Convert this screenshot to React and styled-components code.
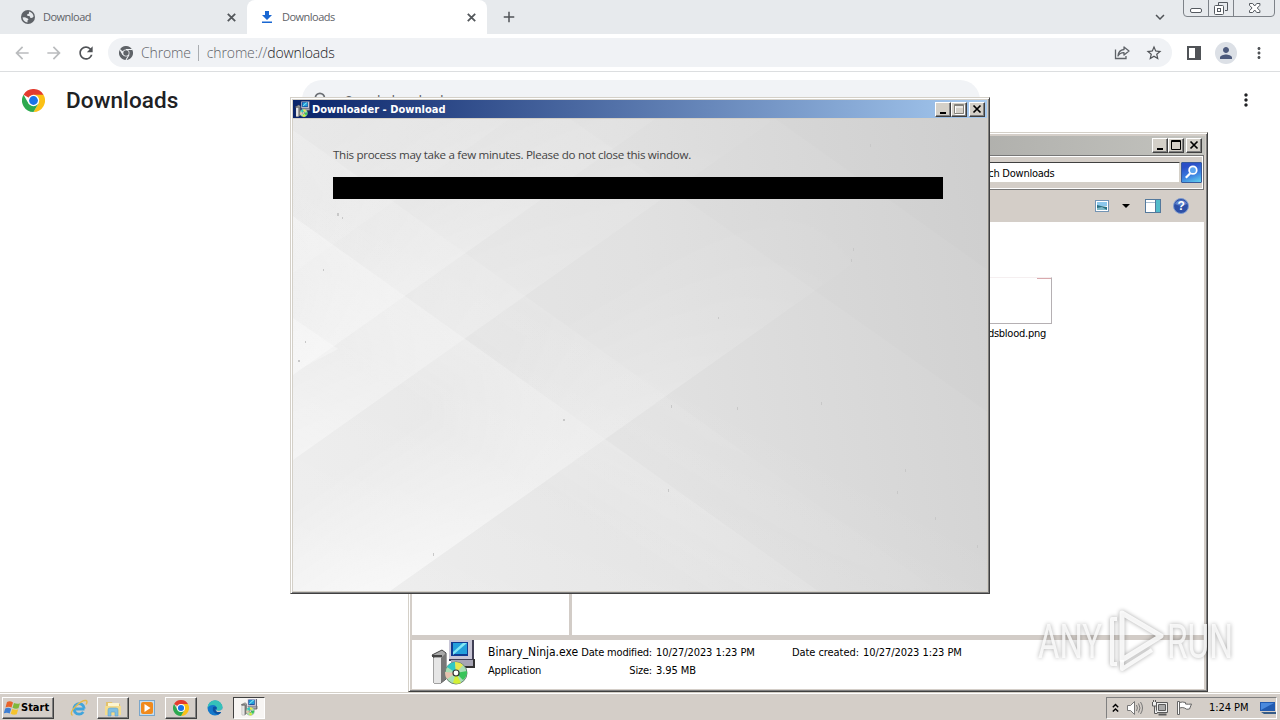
import React from 'react';
import styled, { createGlobalStyle, css } from 'styled-components';
import {
  MdAdd,
  MdArrowBack,
  MdArrowForward,
  MdExpandMore,
  MdMoreVert,
  MdPerson,
  MdRefresh,
  MdSearch,
  MdStarOutline,
} from 'react-icons/md';

const files = [{ name: 'dsblood.png' }];

export default function App() {
  return (
    <Desktop>
      <GlobalStyle />
      <Browser />
      <Explorer />
      <Downloader />
      <Watermark />
      <Taskbar />
    </Desktop>
  );
}

function Browser() {
  return (
    <BrowserWrapper>
      <TabStrip>
        <Tab width={247}>
          <GlobeIcon />
          <TabTitle>Download</TabTitle>
          <CloseIcon />
        </Tab>
        <Tab width={240} active>
          <DownloadIcon />
          <TabTitle>Downloads</TabTitle>
          <CloseIcon />
        </Tab>
        <NewTab>
          <MdAdd size={18} />
        </NewTab>
        <TabSearch>
          <MdExpandMore size={18} />
        </TabSearch>
        <AeroButtons />
      </TabStrip>
      <Toolbar>
        <NavIcons>
          <MdArrowBack size={20} color="#babcbe" />
          <MdArrowForward size={20} color="#babcbe" />
          <MdRefresh size={20} color="#505357" />
        </NavIcons>
        <Omnibox>
          <ChromeLogo size={14} mono />
          <Chip>Chrome</Chip>
          <Separator />
          <Url>
            <span>chrome://</span>downloads
          </Url>
          <ShareIcon />
          <MdStarOutline size={18} />
        </Omnibox>
        <PanelIcon />
        <Avatar>
          <MdPerson size={18} />
        </Avatar>
        <MdMoreVert size={18} color="#505357" />
      </Toolbar>
      <PageHeader>
        <ChromeLogo size={23} />
        <PageTitle>Downloads</PageTitle>
        <SearchField>
          <MdSearch size={20} color="#6b6f74" />
          <span>Search downloads</span>
        </SearchField>
        <MdMoreVert size={20} color="#202124" />
      </PageHeader>
    </BrowserWrapper>
  );
}

function Explorer() {
  return (
    <ExplorerWindow>
      <ExplorerTitle>
        <Controls />
      </ExplorerTitle>
      <AddressRow>
        <SearchBox>Search Downloads</SearchBox>
        <SearchButton>
          <svg width="19" height="19" viewBox="0 0 20 20">
            <circle cx="11.5" cy="7.500" r="4" fill="#5da4ee" stroke="#fff" strokeWidth="1.800" />
            <path d="M8.500 11L4 15.500" stroke="#fff" strokeWidth="2.400" />
          </svg>
        </SearchButton>
      </AddressRow>
      <CommandBar>
        <svg width="14" height="12" viewBox="0 0 14 12">
          <rect x=".5" y=".5" width="13" height="11" fill="#fff" stroke="#7394b4" />
          <path d="M2 2h10v4H2z" fill="#8cc8ec" />
          <path d="M2 5l4 1 6 1v3H2z" fill="#276f80" />
          <path d="M2 8l5-1 5 3H2z" fill="#7fb9c8" />
        </svg>
        <Arrow />
        <svg width="16" height="14" viewBox="0 0 16 14">
          <rect x=".5" y=".5" width="15" height="13" fill="#fff" stroke="#54799c" />
          <path d="M1 3.500h9" stroke="#a9bfd2" />
          <path d="M10 1h5v12h-5z" fill="#52bccb" />
          <path d="M10.500 1v12" stroke="#54799c" />
        </svg>
        <svg width="16" height="16" viewBox="0 0 16 16">
          <circle cx="8" cy="8" r="7.500" fill="#2d50a7" stroke="#7f9cd0" />
          <path d="M2 6a6.200 5 0 0 1 12 0q-6 3-12 0" fill="#5e82cc" />
          <text x="8" y="12.400" textAnchor="middle" fontFamily="Liberation Sans, sans-serif" fontWeight="700" fontSize="12" fill="#fff">?</text>
        </svg>
      </CommandBar>
      <Panes>
        <NavPane />
        <FilePane>
          {files.map((file) => (
            <File key={file.name}>
              <Thumb />
              <span>{file.name}</span>
            </File>
          ))}
        </FilePane>
      </Panes>
      <Details>
        <InstallerIcon width={46} height={46} />
        <DetailColumn width={94}>
          <FileName>Binary_Ninja.exe</FileName>
          <Label>Application</Label>
        </DetailColumn>
        <DetailColumn width={70} right>
          <Label>Date modified:</Label>
          <Label>Size:</Label>
        </DetailColumn>
        <DetailColumn width={136} gap={4}>
          <Value>10/27/2023 1:23 PM</Value>
          <Value>3.95 MB</Value>
        </DetailColumn>
        <DetailColumn width={67}>
          <Value>Date created:</Value>
        </DetailColumn>
        <DetailColumn width={120} gap={4}>
          <Value>10/27/2023 1:23 PM</Value>
        </DetailColumn>
      </Details>
    </ExplorerWindow>
  );
}

function Downloader() {
  return (
    <DialogWindow>
      <DialogTitle>
        <InstallerIcon width={16} height={17} />
        <strong>Downloader - Download</strong>
        <Controls disabledMax />
      </DialogTitle>
      <DialogBody>
        <Backdrop />
        <Message>This process may take a few minutes. Please do not close this window.</Message>
        <ProgressBar />
      </DialogBody>
    </DialogWindow>
  );
}

function Taskbar() {
  return (
    <TaskbarWrapper>
      <StartButton>
        <WindowsFlag />
        <span>Start</span>
      </StartButton>
      <TaskItem><IeIcon /></TaskItem>
      <TaskItem raised><FolderIcon /></TaskItem>
      <TaskItem><PlayerIcon /></TaskItem>
      <TaskItem raised><ChromeLogo size={16} /></TaskItem>
      <TaskItem><EdgeIcon /></TaskItem>
      <TaskItem pressed><InstallerIcon width={17} height={17} /></TaskItem>
      <Tray>
        <svg width="7" height="10" viewBox="0 0 7 10" fill="none" stroke="#000" strokeWidth="1.400">
          <path d="M.8 4.200L3.500 1.500l2.700 2.700M.8 8.600l2.700-2.700 2.700 2.700" />
        </svg>
        <svg width="18" height="16" viewBox="0 0 18 16" fill="none" stroke="#777">
          <path d="M1.500 5.500h3l4-4v13l-4-4h-3z" fill="#fff" />
          <path d="M10.500 5q1.800 3 0 6M12.500 3.500q3 4.500 0 9M14.500 2q4 6 0 12" />
        </svg>
        <svg width="18" height="16" viewBox="0 0 18 16" fill="none" stroke="#5a5a5a">
          <path d="M6.500 3.500h9v8h-9z" fill="#aaa" stroke="#eee" strokeWidth="3" />
          <path d="M5.500 2.500h11v10h-11zM7.500 4.500h7v6h-7z" />
          <path d="M1.500 2v4h4V2M3.500 6v7.500h3M2.500 0v2M4.500 0v2" fill="#eee" />
          <path d="M7.500 14.500h8" strokeWidth="2" />
        </svg>
        <svg width="17" height="16" viewBox="0 0 17 16" fill="#fff" stroke="#666">
          <path d="M3.500 2.500q3-1 6 0v1.500q3 .5 6 0l-2 5q-3 1-5-1-2-1-5 0z" />
          <path d="M1.500 1.500h2v13h-2z" />
        </svg>
        <Clock>1:24 PM</Clock>
        <svg width="16" height="14" viewBox="0 0 16 14">
          <path d="M0 1h15v9H0z" fill="#225bb0" />
          <path d="M1 2h13L1 9z" fill="#4b8add" />
          <path d="M1 11h15v2H4z" fill="#355b86" />
        </svg>
      </Tray>
    </TaskbarWrapper>
  );
}

function Controls({ disabledMax }) {
  return (
    <ControlGroup>
      <ControlButton>
        <path d="M4 9h6v2H4z" fill="#000" />
      </ControlButton>
      <ControlButton>
        {disabledMax && <path d="M3.500 2.500h9v9h-9zM4 4h8" fill="none" stroke="#fff" />}
        <path d="M2.500 1.500h9v9h-9zM2 2.500h10" fill="none" stroke={disabledMax ? '#85827b' : '#000'} />
      </ControlButton>
      <ControlButton close>
        <path d="M3.500 2.500l7 7M10.500 2.500l-7 7" stroke="#000" strokeWidth="1.700" />
      </ControlButton>
    </ControlGroup>
  );
}

function ControlButton({ close, children }) {
  return (
    <ControlBox $close={close}>
      <svg width="14" height="13" viewBox="0 0 14 13">{children}</svg>
    </ControlBox>
  );
}

function AeroButtons() {
  return (
    <AeroSvg width="94" height="18" viewBox="0 0 94 18" fill="none" stroke="#7d8288">
      <path d="M1.500 0v13q0 3.500 3.500 3.500h84q3.500 0 3.500-3.500V0M26.500 0v16M51.500 0v16" />
      <rect x="8.500" y="8.500" width="11" height="4" rx="1.500" fill="#fff" stroke="#555a60" />
      <path d="M36.500 5V2.500h9v8H43" stroke="#555a60" />
      <rect x="32.500" y="5.500" width="9" height="9" rx="1" fill="#fff" stroke="#555a60" />
      <rect x="35.500" y="8.500" width="3" height="3" stroke="#555a60" />
      <path d="M67.500 3.500h3.200l2 2.500 2-2.500h3.200v1.800L75.300 8l2.600 2.700v1.800h-3.200l-2-2.500-2 2.500h-3.200v-1.800L70.100 8l-2.600-2.700z" fill="#fff" stroke="#555a60" />
    </AeroSvg>
  );
}

function CloseIcon() {
  return (
    <svg width="13" height="13" viewBox="0 0 13 13" stroke="#53575b" strokeWidth="1.800">
      <path d="M2.800 2.800l7.400 7.400M10.200 2.800l-7.400 7.400" />
    </svg>
  );
}

function GlobeIcon() {
  return (
    <svg width="16" height="16" viewBox="0 0 16 16">
      <circle cx="8" cy="8" r="7" fill="#5f6368" />
      <path d="M2.500 8.500q3-.5 4 .5 1.500 0 2 1.500l-1 1v2q-4-.5-5-5zM9 2.500q4 1 4.600 5-1.600 2-3.100 1.500l-1-2H7.500L7 5.500l2-1z" fill="#e7eaed" />
    </svg>
  );
}

function DownloadIcon() {
  return (
    <svg width="16" height="16" viewBox="0 0 16 16" fill="#1967d2">
      <path d="M6 2h4v4h3L8 11 3 6h3zM3 12.500h10V14H3z" />
    </svg>
  );
}

function ShareIcon() {
  return (
    <svg width="18" height="18" viewBox="0 0 18 18" fill="none" stroke="#5f6368" strokeWidth="1.300">
      <path d="M2.500 5.500v9h10.500V12" />
      <path d="M11 3l5 4-5 4V8.700q-4-.2-6 3.300.5-6 6-6.500z" strokeLinejoin="round" />
    </svg>
  );
}

function PanelIcon() {
  return (
    <svg width="16" height="16" viewBox="0 0 16 16" fill="#505357">
      <path d="M1 1h14v14H1zM3 3v10h6V3z" fillRule="evenodd" />
    </svg>
  );
}

function ChromeLogo({ size, mono }) {
  const [red, yellow, green, blue] = mono
    ? ['#5f6368', '#5f6368', '#5f6368', '#5f6368']
    : ['#e33b2e', '#fbc116', '#2da94f', '#1a73e8'];
  const gap = mono ? '#f0f2f5' : 'none';
  return (
    <svg width={size} height={size} viewBox="0 0 24 24">
      <path d="M12 12L1.600 6A12 12 0 0 1 22.400 6z" fill={red} />
      <path d="M12 6h10.400A12 12 0 0 1 12 24l5.200-9z" fill={yellow} />
      <path d="M1.600 6A12 12 0 0 0 12 24l5.200-9H6.800z" fill={green} />
      <path d="M12 6h10.400M17.200 15L12 24M6.800 15L1.600 6" stroke={gap} strokeWidth="1.800" />
      <circle cx="12" cy="12" r="6" fill={mono ? '#f0f2f5' : '#fff'} />
      <circle cx="12" cy="12" r="4.600" fill={blue} />
    </svg>
  );
}

function InstallerIcon({ width, height }) {
  return (
    <svg width={width} height={height} viewBox="0 0 46 46">
      <path d="M1 15l10-5 4 3v26l-5 4H3V18z" fill="#a9a9a9" stroke="#444" />
      <path d="M3 18h7v25H3z" fill="#e6e6e6" />
      <path d="M10 18l5-5v26l-5 4z" fill="#777" />
      <path d="M1 16h10" stroke="#444" strokeWidth="2" />
      <path d="M18 0h24v20H18z" fill="#c8c6d6" />
      <path d="M42 0v20H18" fill="none" stroke="#414056" strokeWidth="2" />
      <path d="M20 2h17v14H20z" fill="#103a91" />
      <path d="M22 3h14v11H22z" fill="#229fdb" />
      <path d="M22 12L32 3h4L22 15z" fill="#83e8f4" />
      <path d="M20 20h23v6H20z" fill="#a7a5b4" />
      <path d="M43 19v8h-9" fill="none" stroke="#333" strokeWidth="2" />
      <circle cx="25" cy="33" r="11" fill="#a9dfb4" stroke="#6b8174" />
      <path d="M25 33L16 27a11 11 0 0 1 8-5z" fill="#2fc8c4" />
      <path d="M25 33l-1-11a11 11 0 0 1 8 3z" fill="#e9e84e" />
      <path d="M25 33l11-2a11 11 0 0 1-4 9z" fill="#38c45a" />
      <path d="M25 33l5 10a11 11 0 0 1-8 0z" fill="#d3ef33" />
      <path d="M25 33l-9 6a11 11 0 0 1-2-7z" fill="#e7c1ae" />
      <circle cx="25" cy="33" r="3" fill="#fff" stroke="#333" strokeWidth="1.200" />
    </svg>
  );
}

function WindowsFlag() {
  return (
    <svg width="17" height="16" viewBox="0 0 17 16">
      <path d="M3 2q3-1.500 6 .5L7.500 7.500q-3-1.500-6 0z" fill="#e8632a" />
      <path d="M10 3q3 1.500 6 .3l-1.500 5q-3 1-6-.5z" fill="#7fb83a" />
      <path d="M1.200 8.500q3-1.400 6 .2L5.700 13.500q-3-1.500-6 0z" fill="#3f7fd3" />
      <path d="M8.200 9q3 1.500 6 .3l-1.500 5q-3 1-6-.5z" fill="#f5c32c" />
    </svg>
  );
}

function IeIcon() {
  return (
    <svg width="18" height="18" viewBox="0 0 18 18" fill="none">
      <path d="M14.500 10H5.500M14.300 9.500a5.200 5.200 0 1 0-1 3.500" stroke="#41a5dc" strokeWidth="2.800" />
      <path d="M2.500 16.500Q-1 14 6 7q6-6 10-5.500 2 .8 0 4" stroke="#e4b94a" strokeWidth="1.400" />
    </svg>
  );
}

function FolderIcon() {
  return (
    <svg width="18" height="18" viewBox="0 0 18 18">
      <path d="M2 3h6l1 2h7v11H2z" fill="#e3c26c" />
      <path d="M4 4h11v8H4z" fill="#fdf5cf" />
      <path d="M1 7h16v9H1z" fill="#f4dc8d" />
      <path d="M4 17v-6q0-2 2-2h6q2 0 2 2v6h-3v-4H7v4z" fill="#80bfe2" stroke="#5fa1cb" strokeWidth=".6" />
    </svg>
  );
}

function PlayerIcon() {
  return (
    <svg width="16" height="16" viewBox="0 0 16 16">
      <rect x=".5" y=".5" width="15" height="15" fill="#c6def0" stroke="#7aa6cb" />
      <rect x="2" y="2" width="12" height="12" rx="2" fill="#f08a1d" />
      <path d="M5.500 4v8l6-4z" fill="#fff" />
    </svg>
  );
}

function EdgeIcon() {
  return (
    <svg width="16" height="16" viewBox="0 0 16 16">
      <circle cx="8" cy="8" r="7.500" fill="#1478cb" />
      <path d="M.5 8A7.500 7.500 0 0 1 15.500 7.500Q15 11 10.500 11 8.700 10.500 10 8.500 9.500 5 6 5 2 5 .5 8z" fill="#35c1b9" />
      <path d="M6 7Q4.500 13 11.500 14.500 14 13 14.500 11 11 12.500 9 10.500 8 9 10 8q-1-2.500-4-1z" fill="#0d51a1" />
      <path d="M8 9q1 2 3.500 1.800Q15 10.500 15.400 8L16 12H10z" fill="#d4cec8" />
    </svg>
  );
}

// Faceted grey artwork behind the progress bar
function Backdrop() {
  return (
    <BackdropSvg width="694" height="472" viewBox="293 119 694 472">
      <defs>
        <linearGradient id="base" gradientUnits="userSpaceOnUse" x1="293" y1="350" x2="987" y2="250">
          <stop offset="0" stopColor="#e9e9e9" />
          <stop offset=".5" stopColor="#e1e1e1" />
          <stop offset="1" stopColor="#d3d3d3" />
        </linearGradient>
        <linearGradient id="fade" gradientUnits="userSpaceOnUse" x1="293" y1="450" x2="860" y2="200">
          <stop offset="0" stopColor="#fff" />
          <stop offset=".25" stopColor="#b0b0b0" />
          <stop offset=".55" stopColor="#606060" />
          <stop offset="1" stopColor="#000" />
        </linearGradient>
        <linearGradient id="up" gradientUnits="userSpaceOnUse" x1="0" y1="0" x2="-75" y2="-107">
          <stop offset="0" stopColor="#fff" stopOpacity=".6" />
          <stop offset="1" stopColor="#fff" stopOpacity="0" />
        </linearGradient>
        <linearGradient id="down" gradientUnits="userSpaceOnUse" x1="0" y1="0" x2="-50" y2="72">
          <stop offset="0" stopColor="#fff" stopOpacity=".6" />
          <stop offset="1" stopColor="#fff" stopOpacity="0" />
        </linearGradient>
        <linearGradient id="floor" gradientUnits="userSpaceOnUse" x1="430" y1="640" x2="600" y2="330">
          <stop offset="0" stopColor="#fff" stopOpacity=".28" />
          <stop offset="1" stopColor="#fff" stopOpacity="0" />
        </linearGradient>
        <mask id="m" maskUnits="userSpaceOnUse" x="293" y="119" width="694" height="472">
          <path d="M293 119h694v472H293z" fill="url(#fade)" />
        </mask>
      </defs>
      <path d="M293 119h694v472H293z" fill="url(#base)" />
      <path d="M293 119h694v472H293z" fill="url(#floor)" />
      <g mask="url(#m)">
        <path transform="translate(393 589)" d="M-140 99L700-495V-800H-140z" fill="url(#up)" />
        <path transform="translate(293 460)" d="M-10 7L700-495V-800H-10z" fill="url(#up)" opacity=".65" />
        <path transform="translate(293 375)" d="M-10 7L700-495V-800H-10z" fill="url(#up)" opacity=".65" />
        <path transform="translate(293 273)" d="M-10 7L250-178H-10z" fill="url(#up)" opacity=".25" />
        <path transform="translate(293 216)" d="M-10-7L700 500H-10z" fill="url(#down)" opacity=".7" />
        <path transform="translate(293 130)" d="M-10-7L700 500H-10z" fill="url(#down)" opacity=".4" />
        <path transform="translate(293 318)" d="M-10-7L45 31-10 60z" fill="url(#down)" opacity=".6" />
      </g>
      <path d="M570 119L987 412V119z" fill="#000" opacity=".008" />
      <path d="M775 119L987 270V119z" fill="#000" opacity=".008" />
      <g fill="#c8c8c8">
        <path d="M337 213h2v3h-2zM342 217h1v2h-1zM323 269h1v2h-1zM298 360h2v2h-2zM305 341h1v2h-1zM563 419h2v2h-2zM668 489h1v3h-1zM433 553h1v3h-1zM671 405h1v3h-1zM851 259h1v3h-1zM737 407h1v3h-1zM821 402h1v3h-1zM905 469h1v3h-1zM935 517h1v3h-1zM870 144h1v3h-1zM718 317h1v2h-1zM977 545h1v3h-1zM897 491h1v3h-1zM853 248h1v3h-1z" />
      </g>
    </BackdropSvg>
  );
}

function Watermark() {
  return (
    <WatermarkSvg width="210" height="76" viewBox="1030 604 210 76">
      <g fill="#fff" fillOpacity=".8" fontFamily="Roboto, sans-serif" fontSize="48" fontWeight="400">
        <text x="1038" y="658" textLength="64" lengthAdjust="spacingAndGlyphs">ANY</text>
        <text x="1167" y="658" textLength="66" lengthAdjust="spacingAndGlyphs">RUN</text>
      </g>
      <g fill="none" stroke="#fff" strokeOpacity=".85" strokeWidth="5" strokeLinejoin="round">
        <path d="M1122 613l39 23-39 24z" />
        <path d="M1117 619h-5v45h5" strokeWidth="4" />
        <path d="M1122 660v9l30-19" strokeWidth="4" />
      </g>
    </WatermarkSvg>
  );
}

// Styled Components
const GlobalStyle = createGlobalStyle`
  * {
    box-sizing: border-box;
  }

  body {
    margin: 0;
    overflow: hidden;
  }

  svg {
    display: block;
    flex-shrink: 0;
  }
`;

const tahoma = css`
  font-family: "DejaVu Sans Condensed", "DejaVu Sans", sans-serif;
  font-stretch: condensed;
  font-size: 11px;
  letter-spacing: -0.25px;
  line-height: 15px;
  white-space: nowrap;
`;

const raisedEdge = css`
  border: 1px solid;
  border-color: #fff #404040 #404040 #fff;
  box-shadow: inset -1px -1px 0 #808080;
`;

const Desktop = styled.div`
  position: relative;
  display: flex;
  flex-direction: column;
  width: 1280px;
  height: 720px;
  overflow: hidden;
  background: #fff;
  color: #000;
`;

const BrowserWrapper = styled.div`
  flex: 1;
  font-family: "Open Sans", sans-serif;
`;

const TabStrip = styled.div`
  display: flex;
  height: 34px;
  background: #e7eaed;
`;

const Tab = styled.div`
  display: flex;
  align-items: center;
  width: ${(props) => props.width}px;
  padding: 0 9px 0 ${(props) => (props.active ? 12 : 20)}px;
  border-radius: 8px 8px 0 0;
  background: ${(props) => (props.active ? '#fff' : 'transparent')};
`;

const TabTitle = styled.span`
  flex: 1;
  margin-left: 7px;
  color: #5f6368;
  font-size: 11px;
  line-height: 15px;
  letter-spacing: -0.52px;
  padding-bottom: 1px;
`;

const NewTab = styled.div`
  display: flex;
  align-items: center;
  margin-left: 13px;
  color: #505357;
`;

const TabSearch = styled.div`
  display: flex;
  align-items: center;
  margin-left: auto;
  margin-right: 13px;
  color: #505357;
`;

const AeroSvg = styled.svg`
  margin: 0 4px 0 0;
`;

const Toolbar = styled.div`
  display: flex;
  align-items: center;
  height: 38px;
  padding-right: 12px;
  border-bottom: 1px solid #dcdee0;
`;

const NavIcons = styled.div`
  display: flex;
  align-items: center;
  gap: 12px;
  width: 108px;
  padding-left: 12px;
`;

const Omnibox = styled.div`
  display: flex;
  align-items: center;
  width: 1064px;
  height: 29px;
  margin-right: 14px;
  padding: 0 9px 0 11px;
  border-radius: 15px;
  background: #f0f2f5;
  color: #505357;
  font-size: 14px;
  font-weight: 300;
`;

const Chip = styled.span`
  margin-left: 8px;
  color: #5f6368;
  letter-spacing: -0.15px;
`;

const Separator = styled.i`
  width: 1px;
  height: 16px;
  margin: 0 8px 0 7px;
  background: #aaadb1;
`;

const Url = styled.span`
  flex: 1;
  color: #202124;
  letter-spacing: -0.12px;

  span {
    color: #5f6368;
  }

  & + svg {
    margin-right: 14px;
  }
`;

const Avatar = styled.div`
  display: grid;
  place-items: center;
  width: 22px;
  height: 22px;
  margin: 0 13px 0 13px;
  border-radius: 50%;
  background: #dce0e6;
  color: #4d5a7c;
`;

const PageHeader = styled.div`
  display: flex;
  align-items: center;
  height: 56px;
  padding: 0 24px 0 22px;
  font-family: Roboto, sans-serif;

  & > svg:last-child {
    margin-left: auto;
  }
`;

const PageTitle = styled.h1`
  width: 236px;
  margin: 0 0 0 21px;
  color: #202124;
  font-size: 22.5px;
  font-weight: 500;
  letter-spacing: 0.1px;
`;

const SearchField = styled.div`
  display: flex;
  align-items: center;
  gap: 13px;
  width: 678px;
  height: 40px;
  padding-left: 10px;
  border-radius: 20px;
  background: #f1f3f6;
  color: #5f6368;
  font-size: 13px;
  letter-spacing: -0.1px;
`;

const ExplorerWindow = styled.section`
  position: absolute;
  left: 408px;
  top: 132px;
  display: flex;
  flex-direction: column;
  width: 800px;
  height: 560px;
  padding: 2px;
  border: 1px solid;
  border-color: #d4d0c8 #404040 #404040 #d4d0c8;
  background: #d4cec8;
  box-shadow: inset 1px 1px 0 #fff, inset -1px -1px 0 #808080;
  ${tahoma}
`;

const ExplorerTitle = styled.header`
  display: flex;
  justify-content: flex-end;
  height: 20px;
  padding: 2px 3px 0;
  border-top: 1px solid #d4cec8;
  background: linear-gradient(90deg, #808080, #c3c3be);
`;

const ControlGroup = styled.div`
  display: flex;
  height: 15px;
  margin-left: auto;
`;

const ControlBox = styled.div`
  width: 16px;
  height: 15px;
  margin-left: ${(props) => (props.$close ? 2 : 0)}px;
  background: #d4d0c8;
  ${raisedEdge}
`;

const AddressRow = styled.div`
  display: flex;
  align-items: center;
  justify-content: flex-end;
  height: 35px;
  margin-right: 1px;
  padding-right: 1px;
  border: 1px solid #777;
  border-left: 0;
  box-shadow: inset 0 1px 0 #fff, inset -1px -1px 0 #fff;
`;

const SearchBox = styled.div`
  width: 223px;
  height: 21px;
  margin-right: 1px;
  padding: 3px 9px;
  border: 1px solid;
  border-color: #404040 #d4d0c8 #d4d0c8 #808080;
  background: #fff;
`;

const SearchButton = styled.div`
  width: 21px;
  height: 21px;
  border: 1px solid #375a9b;
  border-radius: 1px;
  background: linear-gradient(160deg, #2b4fc7 20%, #3b7fe0 60%, #62d3ee);
`;

const CommandBar = styled.div`
  display: flex;
  align-items: center;
  justify-content: flex-end;
  height: 32px;
  padding-right: 16px;

  svg:nth-of-type(2) {
    margin: 0 12px 0 15px;
  }
`;

const Arrow = styled.i`
  margin-left: 13px;
  border: 4px solid transparent;
  border-top-color: #000;
  border-bottom: 0;
`;

const Panes = styled.div`
  display: flex;
  flex: 1;
  margin: 0 1px;
  border-bottom: 5px solid #d2ccc7;
  background: #fff;
`;

const NavPane = styled.div`
  width: 160px;
  border-right: 3px solid #d2ccc7;
`;

const FilePane = styled.div`
  flex: 1;
  padding: 55px 0 0 350px;
`;

const File = styled.div`
  width: 130px;
  text-align: right;

  span {
    margin-right: 6px;
  }
`;

const Thumb = styled.div`
  height: 47px;
  margin-bottom: 2px;
  border: 1px solid;
  border-color: #f5eff0 #b5b0b3 #b5b0b3;
  background: linear-gradient(#d9a9ad, #d9a9ad) right top / 14px 1px no-repeat;
`;

const Details = styled.div`
  display: flex;
  height: 49px;
  margin: 0 1px;
  padding: 0 0 0 19px;
  background: #fff;
`;

const DetailColumn = styled.div`
  display: flex;
  flex-direction: column;
  gap: 3px;
  width: ${(props) => props.width}px;
  padding-top: 5px;
  box-sizing: content-box;
  padding-left: ${(props) => props.gap || 0}px;
  align-items: ${(props) => (props.right ? 'flex-end' : 'flex-start')};

  svg + & {
    margin-left: 11px;
  }
`;

const Label = styled.span`
  height: 15px;
  letter-spacing: -0.2px;
`;

const Value = styled(Label)`
  letter-spacing: -0.07px;
`;

const FileName = styled(Label)`
  font-size: 12px;
  letter-spacing: 0;
`;

const DialogWindow = styled.section`
  position: absolute;
  left: 290px;
  top: 97px;
  width: 700px;
  height: 497px;
  padding: 2px;
  border: 1px solid;
  border-color: #d4d0c8 #404040 #404040 #d4d0c8;
  background: #d4d0c8;
  box-shadow: inset 1px 1px 0 #fff, inset -1px -1px 0 #808080;
`;

const DialogTitle = styled.header`
  display: flex;
  align-items: center;
  height: 18px;
  padding: 0 2px;
  background: linear-gradient(90deg, #0a246a, #a6caf0);
  color: #fff;
  ${tahoma}

  strong {
    margin-left: 1px;
    letter-spacing: 0.03px;
  }
`;

const DialogBody = styled.div`
  position: relative;
  height: 473px;
  padding: 28px 40px 0;
`;

const BackdropSvg = styled.svg`
  position: absolute;
  left: 0;
  top: 1px;
`;

const Message = styled.p`
  position: relative;
  margin: 0;
  color: #444;
  font: 11.6px/17px "Open Sans", sans-serif;
  letter-spacing: -0.3px;
  white-space: nowrap;
`;

const ProgressBar = styled.div`
  position: relative;
  width: 610px;
  height: 22px;
  margin-top: 14px;
  background: #000;
`;

const WatermarkSvg = styled.svg`
  position: absolute;
  left: 1030px;
  top: 604px;
  overflow: visible;
  filter: drop-shadow(0 0 2px rgba(0, 0, 0, 0.4));
`;

const TaskbarWrapper = styled.footer`
  display: flex;
  align-items: center;
  height: 28px;
  padding: 2px 3px 0 2px;
  border-top: 1px solid #d4d0c8;
  background: #d4cec8;
  box-shadow: inset 0 1px 0 #fff;
  ${tahoma}
`;

const StartButton = styled.div`
  display: flex;
  align-items: center;
  width: 52px;
  height: 22px;
  margin-right: 9px;
  padding-left: 1px;
  font-weight: 700;
  letter-spacing: 0;
  ${raisedEdge}
`;

const TaskItem = styled.div`
  display: grid;
  place-items: center;
  width: 32px;
  height: 22px;
  margin-right: 2px;
  ${(props) => props.raised && raisedEdge}
  ${(props) =>
    props.pressed &&
    css`
      border: 1px solid;
      border-color: #404040 #fff #fff #404040;
      background: #f7f5f3;
    `}
`;

const Tray = styled.div`
  display: flex;
  align-items: center;
  gap: 7px;
  width: 171px;
  height: 22px;
  margin-left: auto;
  padding: 0 0 0 5px;
  border: 1px solid;
  border-color: #808080 #fff #fff #808080;
`;

const Clock = styled.span`
  flex: 1;
  margin-left: 9px;
  letter-spacing: -0.05px;
`;
